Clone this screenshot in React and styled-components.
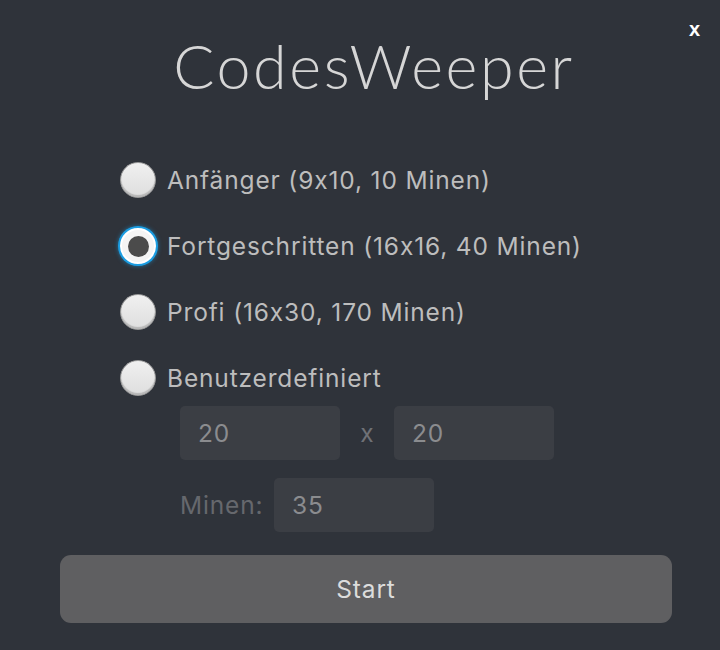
import React, { useState } from 'react'
import styled, { createGlobalStyle } from 'styled-components'

const GlobalStyle = createGlobalStyle`
  html, body {
    margin: 0;
    padding: 0;
    background: #2f333a;
  }
  * { box-sizing: border-box; }
`

const Page = styled.div`
  position: relative;
  width: 720px;
  height: 650px;
  background: #2f333a;
  font-family: Inter, "Open Sans", sans-serif;
  font-feature-settings: "calt" 0;
  display: flex;
  flex-direction: column;
  padding: 30px 48px 0 60px;
`

const Close = styled.button`
  position: absolute;
  top: 18px;
  right: 20px;
  background: none;
  border: none;
  color: #ffffff;
  font-family: "Liberation Sans", Arial, sans-serif;
  font-weight: bold;
  font-size: 20px;
  padding: 0;
  cursor: pointer;
`

const Title = styled.h1`
  margin: 0;
  padding-left: 16px;
  text-align: center;
  font-family: Lato, sans-serif;
  font-weight: 300;
  font-size: 61px;
  line-height: 72px;
  color: #d6d6d6;
  letter-spacing: 2.6px;
`

const Options = styled.div`
  display: flex;
  flex-direction: column;
  margin: 60px 0 0 60px;
  gap: 30px;
`

const Option = styled.label`
  display: flex;
  align-items: center;
  gap: 11px;
  height: 36px;
  font-size: 24.5px;
  letter-spacing: 0.85px;
  color: #bdbdbd;
  cursor: pointer;
`

const Radio = styled.span`
  position: relative;
  width: 36px;
  height: 36px;
  border-radius: 50%;
  flex-shrink: 0;
  background: linear-gradient(#f0f0f0, #dedede);
  border: 1px solid #9a9a9a;
  box-shadow: inset 0 -2px 1px rgba(0, 0, 0, 0.18);
  ${p => p.checked && `
    background: #f4f4f4;
    border: 2px solid #ffffff;
    box-shadow: 0 0 0 2px #1b9de2, 0 0 4px 2px rgba(27, 157, 226, 0.6);
    &::after {
      content: '';
      position: absolute;
      left: 50%;
      top: 50%;
      width: 21px;
      height: 21px;
      margin: -10.5px 0 0 -10.5px;
      border-radius: 50%;
      background: #4b4b4b;
    }
  `}
`

const Custom = styled.div`
  display: flex;
  flex-direction: column;
  gap: 18px;
  margin: -20px 0 0 60px;
`

const FieldRow = styled.div`
  display: flex;
  align-items: center;
`

const Field = styled.input`
  width: 160px;
  height: 54px;
  border: none;
  border-radius: 5px;
  background: #3b3e44;
  color: #8b8c8f;
  font-family: Inter, "Open Sans", sans-serif;
  font-size: 24.5px;
  letter-spacing: 0.85px;
  padding: 0 18px;
  outline: none;
`

const Times = styled.span`
  width: 54px;
  text-align: center;
  color: #6f7176;
  font-size: 24.5px;
`

const FieldLabel = styled.span`
  width: 94px;
  color: #66686d;
  font-size: 24.5px;
  letter-spacing: 0.85px;
`

const StartButton = styled.button`
  margin-top: 23px;
  height: 68px;
  width: 612px;
  border: none;
  border-radius: 11px;
  background: #5f5f61;
  color: #dcdcdc;
  font-family: Inter, "Open Sans", sans-serif;
  font-size: 24.5px;
  letter-spacing: 0.85px;
  cursor: pointer;
`

const levels = [
  { id: 'beginner', label: 'Anfänger (9x10, 10 Minen)' },
  { id: 'advanced', label: 'Fortgeschritten (16x16, 40 Minen)' },
  { id: 'pro', label: 'Profi (16x30, 170 Minen)' },
  { id: 'custom', label: 'Benutzerdefiniert' },
]

export default function App() {
  const [level, setLevel] = useState('advanced')
  return (
    <Page>
      <GlobalStyle />
      <Close>x</Close>
      <Title>CodesWeeper</Title>
      <Options>
        {levels.map(l => (
          <Option key={l.id} onClick={() => setLevel(l.id)}>
            <Radio checked={level === l.id} />
            {l.label}
          </Option>
        ))}
        <Custom>
          <FieldRow>
            <Field defaultValue="20" />
            <Times>x</Times>
            <Field defaultValue="20" />
          </FieldRow>
          <FieldRow>
            <FieldLabel>Minen:</FieldLabel>
            <Field defaultValue="35" />
          </FieldRow>
        </Custom>
      </Options>
      <StartButton>Start</StartButton>
    </Page>
  )
}
